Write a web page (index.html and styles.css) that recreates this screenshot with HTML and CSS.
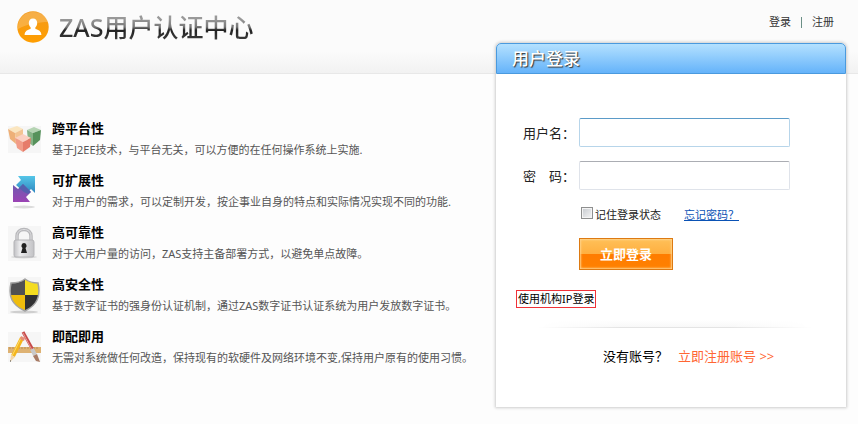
FILE: index.html
```
<!DOCTYPE html>
<html lang="zh-CN">
<head>
    <meta charset="UTF-8">
    <meta name="viewport" content="width=device-width, initial-scale=1.0">
    <title>ZAS用户认证中心</title>
    <link rel="stylesheet" href="styles.css">
</head>
<body>
    <header class="header">
        <div class="logo">
            <svg class="logo-icon" viewBox="0 0 32 32" aria-hidden="true">
                <defs>
                    <linearGradient id="orange" x1="0" y1="0" x2="0" y2="1">
                        <stop offset="0" stop-color="#f39a1c"/>
                        <stop offset="1" stop-color="#ff9e00"/>
                    </linearGradient>
                </defs>
                <circle cx="16" cy="16" r="15.7" fill="url(#orange)"/>
                <path d="M1 16C1 7 8 1 16 1s14 5 15 10C22 11 10 13 1 18z" fill="#fff" opacity=".2"/>
                <path d="M16 7.500c2.700 0 4.200 2 4.200 4.500 0 1.800-.7 3.300-1.800 4.300v1.700c3 .8 6 2.200 6 6H7.600c0-3.800 3-5.200 6-6v-1.700c-1.100-1-1.800-2.500-1.800-4.300 0-2.500 1.500-4.500 4.200-4.500z" fill="#fff"/>
            </svg>
            <h1>ZAS用户认证中心</h1>
        </div>
        <nav class="top-nav">
            <a href="#">登录</a>
            <span class="sep"></span>
            <a href="#">注册</a>
        </nav>
    </header>

    <main class="main">
        <ul class="features">
            <li>
                <svg class="icon" viewBox="0 0 33 37" aria-hidden="true">
                    <path fill="#f6f6f6" d="M0 5h33v27H0z"/>
                    <path fill="#fbe6c0" d="M0 8l9-3 6 3-8 4z"/>
                    <path fill="#eeb078" d="M0 8l7 4 1 11-6-5z"/>
                    <path fill="#f3c493" d="M7 12l8-4v9l-7 6z"/>
                    <path fill="#b5d4b3" d="M19 9l7-3 7 3-8 3z"/>
                    <path fill="#86b387" d="M19 9l6 3v13l-5-4z"/>
                    <path fill="#56915b" d="M25 12l8-3-1 10-7 6z"/>
                    <path fill="#fbd0c2" d="M7 17l8-4 8 4-8 4z"/>
                    <path fill="#f19c88" d="M7 17l8 4v10l-6-4z"/>
                    <path fill="#e67c6a" d="M15 21l8-4-1 9-7 5z"/>
                </svg>
                <div>
                    <h2>跨平台性</h2>
                    <p>基于J2EE技术，与平台无关，可以方便的在任何操作系统上实施.</p>
                </div>
            </li>
            <li>
                <svg class="icon" viewBox="0 0 33 37" aria-hidden="true">
                    <defs>
                        <linearGradient id="blue" x1="0" y1="0" x2="0" y2="1">
                            <stop offset="0" stop-color="#55c6e8"/>
                            <stop offset="1" stop-color="#2d83bd"/>
                        </linearGradient>
                        <linearGradient id="purple" x1="0" y1="0" x2="0" y2="1">
                            <stop offset="0" stop-color="#6c5cb0"/>
                            <stop offset="1" stop-color="#9b43b4"/>
                        </linearGradient>
                    </defs>
                    <ellipse cx="16" cy="34" rx="11" ry="1.500" fill="#dcdcdc"/>
                    <path fill="url(#blue)" d="M10 3h17v17l-4-4-5 5-10-9 5-5z"/>
                    <path fill="url(#purple)" d="M5 12l5 4 5-5 8 8-5 5 4 5H5z"/>
                    <path fill="#4464ad" d="M11 15l4-4 8 8-3 2-4-2z" opacity=".7"/>
                </svg>
                <div>
                    <h2>可扩展性</h2>
                    <p>对于用户的需求，可以定制开发，按企事业自身的特点和实际情况实现不同的功能.</p>
                </div>
            </li>
            <li>
                <svg class="icon" viewBox="0 0 33 37" aria-hidden="true">
                    <defs>
                        <linearGradient id="silver" x1="0" y1="0" x2="1" y2="0">
                            <stop offset="0" stop-color="#c0c0c3"/>
                            <stop offset=".3" stop-color="#ececee"/>
                            <stop offset="1" stop-color="#c2c2c5"/>
                        </linearGradient>
                    </defs>
                    <path fill="#f6f6f6" d="M0 1h33v35H0z"/>
                    <ellipse cx="16" cy="32" rx="13" ry="1.500" fill="#dadada"/>
                    <path fill="none" stroke="#b8b8bb" stroke-width="3.500" d="M9 16v-5c0-4 3-6.500 7-6.500s7 2.500 7 6.500v5"/>
                    <path fill="none" stroke="#dedee0" d="M9 16v-5c0-4 3-6.500 7-6.500s7 2.500 7 6.500v5"/>
                    <rect x="6" y="15" width="20" height="17" rx="2" fill="url(#silver)" stroke="#b4b4b7"/>
                    <path fill="#222" d="M16 18a2.800 2.800 0 0 1 1.500 5l1.500 5h-6l1.500-5A2.800 2.800 0 0 1 16 18z"/>
                </svg>
                <div>
                    <h2>高可靠性</h2>
                    <p>对于大用户量的访问，ZAS支持主备部署方式，以避免单点故障。</p>
                </div>
            </li>
            <li>
                <svg class="icon" viewBox="0 0 33 37" aria-hidden="true">
                    <defs>
                        <clipPath id="shield">
                            <path d="M17 2c4 3 8 4 13 4 3 14-1 22-13 28C4 28 0 20 3 6c5 0 10-1 14-4z"/>
                        </clipPath>
                    </defs>
                    <path fill="#f6f6f6" d="M0 0h33v37H0z"/>
                    <ellipse cx="16" cy="35" rx="14" ry="1.500" fill="#cfcfcf"/>
                    <g clip-path="url(#shield)">
                        <path fill="#505052" d="M0 0h17v18H0z"/>
                        <path fill="#f4dc20" d="M17 0h16v18H17z"/>
                        <path fill="#efbc0c" d="M0 18h17v19H0z"/>
                        <path fill="#303032" d="M17 18h16v19H17z"/>
                    </g>
                    <path fill="none" stroke="#a3a3a3" stroke-width="1.500" d="M17 2c4 3 8 4 13 4 3 14-1 22-13 28C4 28 0 20 3 6c5 0 10-1 14-4z"/>
                </svg>
                <div>
                    <h2>高安全性</h2>
                    <p>基于数字证书的强身份认证机制，通过ZAS数字证书认证系统为用户发放数字证书。</p>
                </div>
            </li>
            <li>
                <svg class="icon" viewBox="0 0 33 37" aria-hidden="true">
                    <path fill="#f6f6f6" d="M0 3h33v30H0z"/>
                    <path fill="#deb273" d="M0 18h33v6H0z"/>
                    <path stroke="#b98f54" d="M2 18v2M5 18v2M8 18v2M11 18v2M14 18v2M17 18v2M20 18v2M23 18v2M26 18v2M29 18v2"/>
                    <path stroke="#c64a4a" stroke-width="3" d="M15 3l10 18"/>
                    <path stroke="#e89a94" d="M15 4l9 17"/>
                    <path stroke="#c9c9c9" stroke-width="4" d="M24 20l3 6"/>
                    <path fill="#a87c66" d="M25 27l4-2 3 8-4-1z"/>
                    <path stroke="#f5b51c" stroke-width="4" d="M14 9L5 27"/>
                    <path stroke="#fbdc6e" d="M13 9L4 27"/>
                    <path fill="#e58d77" d="M13 7l4 2-1 3-4-2z"/>
                    <path fill="#f2d5a8" d="M3 26l4 2-5 5z"/>
                    <path fill="#444" d="M2 31l1 1-1 1z"/>
                </svg>
                <div>
                    <h2>即配即用</h2>
                    <p>无需对系统做任何改造，保持现有的软硬件及网络环境不变,保持用户原有的使用习惯。</p>
                </div>
            </li>
        </ul>

        <section class="login">
            <h2 class="login-title">用户登录</h2>
            <form class="login-form">
                <div class="field">
                    <label for="username">用户名：</label>
                    <input type="text" id="username" class="active">
                </div>
                <div class="field">
                    <label for="password">密　码：</label>
                    <input type="password" id="password">
                </div>
                <div class="options">
                    <input type="checkbox" id="remember">
                    <label for="remember">记住登录状态</label>
                    <a href="#">忘记密码？</a>
                </div>
                <button type="submit" class="submit">立即登录</button>
                <a href="#" class="ip-login">使用机构IP登录</a>
            </form>
            <div class="divider"></div>
            <p class="register">没有账号？<a href="#">立即注册账号 &gt;&gt;</a></p>
        </section>
    </main>
</body>
</html>
```
FILE: styles.css
```
* {
    box-sizing: border-box;
}
body {
    margin: 0;
    background: #fdfdfd;
    color: #000;
    font-family: "Noto Sans", "Noto Sans CJK SC", sans-serif;
    font-size: 11px;
}
h1, h2, p, ul {
    margin: 0;
    padding: 0;
}
a {
    color: #333;
    text-decoration: none;
}

/* header */
.header {
    display: flex;
    justify-content: space-between;
    align-items: flex-start;
    height: 74px;
    padding: 11px 24px 0 17px;
    background: linear-gradient(#fbfbfb 70%, #f2f2f2);
    border-bottom: 1px solid #e8e8e8;
}
.logo {
    display: flex;
    align-items: center;
    gap: 10px;
}
.logo-icon {
    width: 32px;
    height: 32px;
}
.logo h1 {
    font-size: 25px;
    font-weight: 500;
    line-height: 32px;
    background: linear-gradient(#999 25%, #777 50%, #222 60%, #444);
    -webkit-background-clip: text;
    background-clip: text;
    color: transparent;
}
.top-nav {
    display: flex;
    align-items: center;
    gap: 10px;
    line-height: 22px;
}
.sep {
    width: 1px;
    height: 11px;
    background: #6b8f86;
}

/* content */
.main {
    display: flex;
    align-items: flex-start;
    padding: 0 12px 16px 8px;
}
.features {
    flex: 1;
    padding-top: 43px;
    list-style: none;
}
.features li {
    display: flex;
    align-items: center;
    gap: 11px;
    margin-bottom: 8px;
}
.icon {
    flex: none;
    width: 33px;
    height: 37px;
}
.features h2 {
    font-size: 13px;
    line-height: 22px;
}
.features p {
    color: #555;
    line-height: 22px;
}

/* login box */
.login {
    flex: 0 1 350px;
    margin-top: -31px;
    background: #fff;
    border-radius: 5px 5px 0 0;
    box-shadow: 0 0 3px 1px #ccc;
}
.login-title {
    height: 31px;
    padding-left: 15px;
    border: 1px solid #4a9ade;
    border-radius: 5px 5px 0 0;
    background: linear-gradient(#b4e1ff, #65b3fa);
    color: #fff;
    font-size: 17px;
    font-weight: 500;
    line-height: 30px;
    text-shadow: 1px 1px 1px #333;
}
.login-form {
    display: flex;
    flex-direction: column;
    align-items: flex-start;
    gap: 14px;
    padding: 44px 20px 0 27px;
}
.field {
    display: flex;
    align-items: center;
    width: 100%;
}
.field label {
    flex: 0 0 56px;
    color: #222;
    font-size: 13px;
}
.field input {
    width: 211px;
    min-width: 0;
    height: 29px;
    padding: 0 6px;
    border: 1px solid #dfe3ea;
    border-top-color: #abadb3;
    border-radius: 2px;
    background: #fff;
    outline: none;
}
.field input.active,
.field input:focus {
    border-color: #b7d5ea;
    border-top-color: #5b9bc8;
}
.options {
    display: flex;
    align-items: center;
    height: 20px;
    padding-left: 58px;
    color: #222;
}
.options input {
    appearance: none;
    width: 12px;
    height: 12px;
    margin: 0 2px 3px 0;
    border: 1px solid #8e8f8f;
    background: linear-gradient(135deg, #c5c9ce, #f6f6f6);
    box-shadow: inset 0 0 0 1px #f4f4f4;
}
.options input:checked {
    background: #3b78b5;
}
.options a {
    margin-left: 23px;
    color: #0a52b5;
    text-decoration: underline;
}
.submit {
    width: 94px;
    height: 32px;
    margin-left: 56px;
    padding: 0 0 2px;
    border: 1px solid #dd7a12;
    background: linear-gradient(#ffc058, #ffaf40 50%, #ff7c00 50%, #ff8100);
    box-shadow: inset 0 0 2px 1px #ffd28a;
    color: #fff;
    font-family: inherit;
    font-size: 13px;
    font-weight: bold;
    cursor: pointer;
}
.ip-login {
    margin: 6px 0 0 -7px;
    padding: 0 1px;
    border: 1px solid #f03238;
    color: #000;
    line-height: 16px;
}
.divider {
    height: 8px;
    margin: 12px 34px 0 42px;
    border-bottom: 1px solid #e4e4e4;
    background: linear-gradient(#fff, #f8f8f8);
    -webkit-mask-image: linear-gradient(90deg, transparent, #000 30%, #000 70%, transparent);
    mask-image: linear-gradient(90deg, transparent, #000 30%, #000 70%, transparent);
}
.register {
    padding: 18px 20px 41px 107px;
    font-size: 13px;
    line-height: 20px;
}
.register a {
    margin-left: 10px;
    color: #ff6633;
}

@media (max-width: 780px) {
    .main {
        flex-direction: column;
        gap: 20px;
        padding-right: 8px;
    }
    .login {
        flex: none;
        width: 100%;
        max-width: 350px;
        margin-top: 0;
    }
}
```
